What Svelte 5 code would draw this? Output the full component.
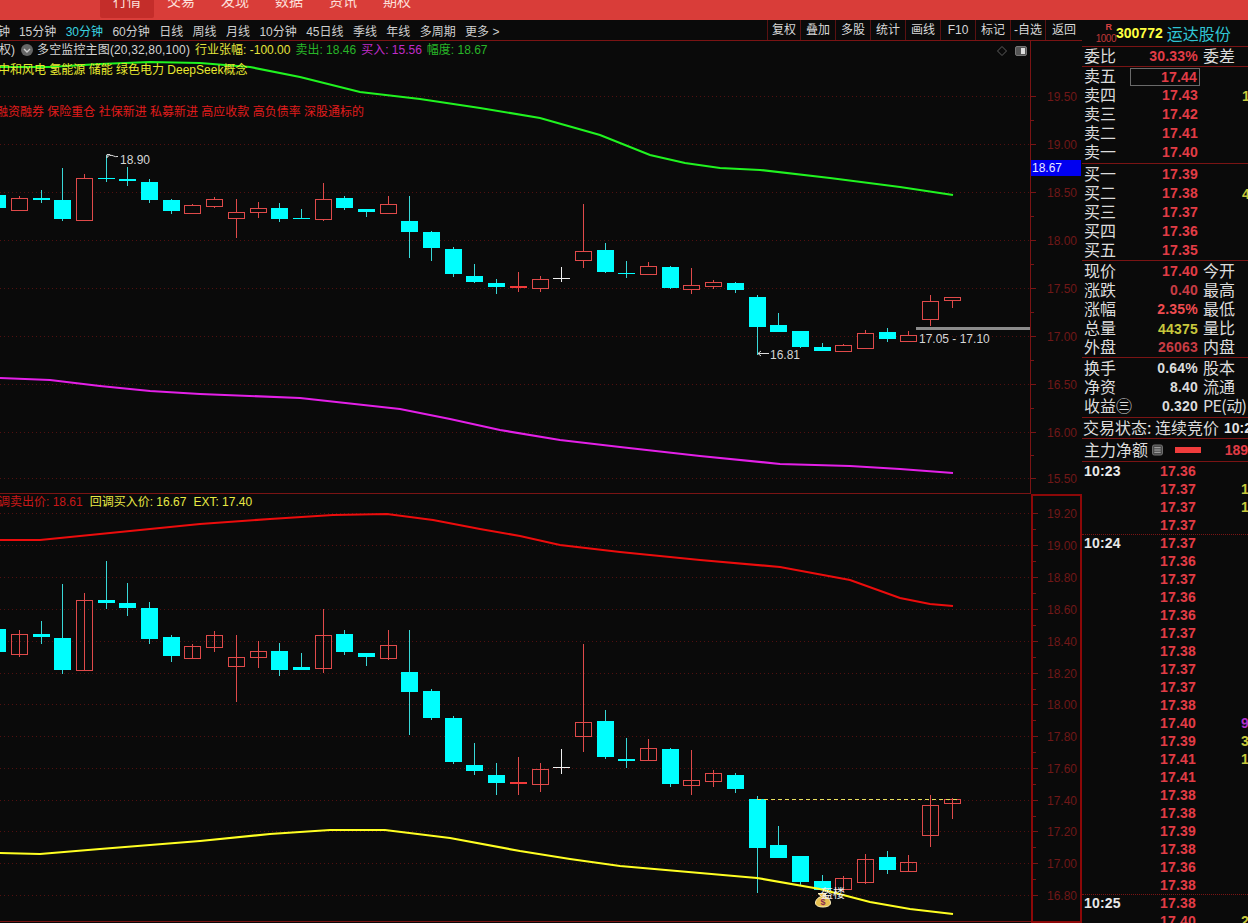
<script>
  const xs = [-3,19,41,62,84,106,127,149,171,192,214,236,258,279,301,323,344,366,388,409,431,453,474,496,518,540,561,583,605,626,648,670,691,713,735,757,778,800,822,843,865,887,908,930,952];
  // type, bodyTop, bodyBottom, wickTop, wickBottom
  const topC = [
    ['c',195,208,195,208],['r',198,210,196,211],['c',198,200,190,203],['c',200,219,168,221],['r',178,220,174,220],
    ['c',178,179,155,182],['c',179,181,167,186],['c',182,200,179,203],['c',200,211,199,214],['r',205,213,204,213],
    ['r',199,206,197,208],['r',212,218,199,238],['r',208,212,202,218],['c',208,219,203,222],['c',218,219,209,219],
    ['r',199,219,183,221],['c',198,208,196,210],['c',209,212,209,217],['r',204,213,196,213],['c',221,232,196,258],
    ['c',232,248,231,261],['c',249,274,247,277],['c',276,282,264,283],['c',283,287,279,294],['r',286,287,272,292],
    ['r',279,288,276,292],['w',278,279,267,282],['r',251,260,204,268],['c',250,272,243,273],['c',273,274,261,278],
    ['r',266,274,262,274],['c',267,288,266,289],['r',285,289,268,294],['r',282,286,280,289],['c',283,290,282,293],
    ['c',297,327,295,355],['c',325,332,313,332],['c',331,347,331,348],['c',347,351,343,351],['r',345,351,344,352],
    ['r',333,348,330,348],['c',332,339,328,342],['r',335,341,331,341],['r',301,319,295,326],['r',297,300,297,308]
  ];
  const botC = [
    ['c',629,652,629,652],['r',634,654,630,657],['c',634,637,621,644],['c',638,670,584,674],['r',600,670,593,671],
    ['c',600,603,561,609],['c',603,608,583,616],['c',608,639,602,644],['c',637,656,635,662],['r',646,658,644,658],
    ['r',635,647,631,652],['r',657,666,635,702],['r',651,657,641,668],['c',651,670,643,676],['c',667,670,653,670],
    ['r',635,668,609,673],['c',634,652,630,655],['c',653,657,653,666],['r',645,658,630,660],['c',672,692,630,735],
    ['c',691,718,689,720],['c',718,762,716,764],['c',765,771,743,775],['c',775,783,763,795],['r',782,783,757,795],
    ['r',769,784,763,792],['w',767,768,749,774],['r',722,736,644,752],['c',721,757,710,759],['c',759,761,738,768],
    ['r',748,760,739,761],['c',749,784,748,787],['r',780,785,750,795],['r',773,781,770,787],['c',775,789,773,793],
    ['c',799,848,796,893],['c',845,858,826,858],['c',856,882,856,885],['c',881,890,875,890],['r',878,889,876,892],
    ['r',859,882,854,884],['c',857,870,851,874],['r',862,871,855,871],['r',805,835,795,847],['r',799,803,798,819]
  ];
  const green = '0,67 50,67 100,64 150,62 200,63 250,67 300,77 360,92 420,99 480,108 540,118 600,135 650,155 685,163 720,168 760,170 830,178 900,187 953,195';
  const magenta = '0,378 50,380 100,386 150,391 200,394 300,398 400,409 450,419 500,430 560,440 620,447 700,456 780,464 850,466 900,469 953,473';
  const redL = '0,540 40,540 100,534 200,524 270,519 333,515 387,514 433,520 480,529 520,536 560,545 620,552 700,560 780,567 850,580 900,598 930,604 953,606';
  const yellowL = '0,853 40,854 100,849 200,841 270,834 330,830 385,830 450,838 520,851 570,859 620,866 700,873 757,878 820,889 870,902 910,909 953,914';

  const topTicks = [['19.50',96],['19.00',144],['18.50',192],['18.00',240],['17.50',288],['17.00',336],['16.50',384],['16.00',432],['15.50',478]];
  const botTicks = [['19.20',513],['19.00',545],['18.80',577],['18.60',609],['18.40',641],['18.20',673],['18.00',704],['17.80',736],['17.60',768],['17.40',800],['17.20',831],['17.00',863],['16.80',895]];
  const minor = (t) => t.slice(1).map((v, i) => Math.round((v[1] + t[i][1]) / 2));

  const tabs = ['行情','交易','发现','数据','资讯','期权'];
  const periods = ['15分钟','30分钟','60分钟','日线','周线','月线','10分钟','45日线','季线','年线','多周期'];
  const tools = ['复权','叠加','多股','统计','画线','F10','标记','-自选','返回'];

  const sells = [['卖五','17.44',''],['卖四','17.43','1'],['卖三','17.42',''],['卖二','17.41',''],['卖一','17.40','']];
  const buys = [['买一','17.39',''],['买二','17.38','4'],['买三','17.37',''],['买四','17.36',''],['买五','17.35','']];
  const stats = [
    ['现价','17.40','今开','red'],['涨跌','0.40','最高','dim'],['涨幅','2.35%','最低','hot'],
    ['总量','44375','量比','vol'],['外盘','26063','内盘','dim']
  ];
  const fin = [['换手','0.64%','股本'],['净资','8.40','流通'],['收益㊂','0.320','PE(动)']];
  const ticks = [
    ['10:23','17.36',''],['','17.37','1'],['','17.37','1'],['','17.37',''],
    ['10:24','17.37',''],['','17.36',''],['','17.37',''],['','17.36',''],['','17.36',''],['','17.37',''],['','17.38',''],['','17.37',''],['','17.37',''],['','17.38',''],
    ['','17.40','9','purple'],['','17.39','3'],['','17.41','1'],['','17.41',''],['','17.38',''],['','17.38',''],['','17.39',''],['','17.38',''],['','17.36',''],['','17.38',''],
    ['10:25','17.38',''],['','17.40','2']
  ];
</script>

{#snippet candles(list, through)}
  {#each list as c, i}
    {@const x = xs[i]}
    {#if c[0] === 'c'}
      <rect x={x} y={c[3]} width="1" height={c[4] - c[3]} fill="#38d8d8" />
      <rect x={x - 8} y={c[1]} width="17" height={c[2] - c[1]} fill="#00ffff" />
    {:else if c[0] === 'w'}
      <rect x={x} y={c[3]} width="1" height={c[4] - c[3]} fill="#f0f0f0" />
      <rect x={x - 8} y={c[1]} width="17" height="1" fill="#f0f0f0" />
    {:else}
      <rect x={x} y={c[3]} width="1" height={c[4] - c[3]} fill="#e04a4a" />
      {#if c[2] - c[1] <= 1}
        <rect x={x - 8} y={c[1]} width="17" height="2" fill="#f03a3a" />
      {:else}
        {#if !through}
          <rect x={x - 8} y={c[1]} width="17" height={c[2] - c[1]} fill="#0a0a0a" />
        {/if}
        <rect x={x - 8} y={c[1]} width="17" height="1" fill="#e04a4a" />
        <rect x={x - 8} y={c[2]} width="17" height="1" fill="#e04a4a" />
        <rect x={x - 8} y={c[1]} width="1" height={c[2] - c[1]} fill="#e04a4a" />
        <rect x={x + 8} y={c[1]} width="1" height={c[2] - c[1]} fill="#e04a4a" />
      {/if}
    {/if}
  {/each}
{/snippet}

{#snippet axis(t, x0)}
  {#each t as v}
    <line class="grid" x1="0" x2="1030" y1={v[1] + 0.5} y2={v[1] + 0.5} />
    <rect x={x0} y={v[1]} width="5" height="1" fill="#7a1414" />
    <text class="ax" x="1077" y={v[1] + 5}>{v[0]}</text>
  {/each}
  {#each minor(t) as y}
    <rect x={x0} y={y} width="3" height="1" fill="#7a1414" />
  {/each}
{/snippet}

<div class="screen">
  <header class="topbar">
    {#each tabs as t, i}
      <div class="tab" class:active={i === 0}>{t}</div>
    {/each}
  </header>

  <div class="main">
    <div class="left">
      <nav class="toolbar">
        <div class="periods">
          <span class="clip">钟</span>
          {#each periods as p}
            <span class:cur={p === '30分钟'}>{p}</span>
          {/each}
          <span>更多 &gt;</span>
        </div>
        <div class="tools">
          {#each tools as t}<span class="tool">{t}</span>{/each}
        </div>
      </nav>

      <section class="panel top">
        <svg width="1082" height="453" viewBox="0 41 1082 453" shape-rendering="crispEdges">
          {@render axis(topTicks, 1031)}
          <rect x="1030" y="41" width="1" height="453" fill="#7a1414" />
          <rect x="0" y="493" width="1030" height="1" fill="#7a1414" />
          <g shape-rendering="auto">
            <polyline class="ln" points={green} stroke="#20f420" />
            <polyline class="ln" points={magenta} stroke="#e420e8" />
          </g>
          {@render candles(topC, false)}

          <rect x="916" y="327" width="114" height="3" fill="#8c8c8c" />
          <text class="note" x="919" y="343">17.05 - 17.10</text>
          <g shape-rendering="auto" fill="none" stroke="#dcdcdc">
            <path d="M107 158V154.5h3l-3 3" />
            <path d="M110 155.5c3-1 4 2 8 1" />
            <path d="M769 353.5H758M761 351l-3 2.5 3 2.5" />
          </g>
          <text class="note" x="120" y="164">18.90</text>
          <text class="note" x="770" y="359">16.81</text>

          <rect x="1031" y="160" width="50" height="16" fill="#0000f0" />
          <text class="tag" x="1032" y="172">18.67</text>

          <g shape-rendering="auto">
            <path d="M1002 46.5l4.5 4.5-4.5 4.5-4.5-4.5z" fill="none" stroke="#5c5c5c" />
            <rect x="1015.5" y="46.5" width="11" height="9" rx="1.5" fill="#555" stroke="#777" />
            <rect x="1021" y="48" width="4" height="6" fill="#ddd" />
          </g>
        </svg>

        <div class="legend row1">
          <span class="wh">权)</span>
          <span class="dot"><svg width="12" height="12" viewBox="0 0 12 12"><circle cx="6" cy="6" r="6" fill="#666" /><path d="M3 5l3 3 3-3" fill="none" stroke="#ccc" stroke-width="1.4" /></svg></span>
          <span class="wh title">多空监控主图(20,32,80,100)</span>
          <span class="yl">行业张幅: -100.00</span>
          <span class="gr">卖出: 18.46</span>
          <span class="pu">买入: 15.56</span>
          <span class="gr">幅度: 18.67</span>
        </div>
        <div class="legend row2">中和风电 氢能源 储能 绿色电力 DeepSeek概念</div>
        <div class="legend row3">融资融券 保险重仓 社保新进 私募新进 高应收款 高负债率 深股通标的</div>
      </section>

      <section class="panel bottom">
        <svg width="1082" height="429" viewBox="0 494 1082 429" shape-rendering="crispEdges">
          {@render axis(botTicks, 1033)}
          <rect x="0" y="921" width="1031" height="1" fill="#7a1414" />
          <rect x="1031" y="494" width="2" height="429" fill="#8c0808" />
          <rect x="1080" y="494" width="2" height="429" fill="#8c0808" />
          <rect x="1031" y="494" width="51" height="2" fill="#8c0808" />
          <rect x="1031" y="921" width="51" height="2" fill="#8c0808" />
          <g shape-rendering="auto">
            <polyline class="ln" points={redL} stroke="#ec0c0c" />
          </g>
          {@render candles(botC, true)}
          <g shape-rendering="auto">
            <polyline class="ln" points={yellowL} stroke="#ffff22" />
          </g>
          <line class="dash" x1="757" x2="960" y1="799.5" y2="799.5" />

          <g shape-rendering="auto">
            <path d="M818 893.5h8l-1.5 3c4 1 6 4 6 6.5 0 2.500-3 4-7.500 4s-7.500-1.500-7.500-4c0-2.500 2-5.500 6-6.500z" fill="#e8c050" stroke="#fff0c0" />
            <text class="bag" x="823" y="905">$</text>
          </g>
          <text class="sig" x="821" y="898">盔楼</text>
        </svg>

        <div class="legend row4">
          <span class="rd">回调卖出价: 18.61</span>
          <span class="yl2">回调买入价: 16.67</span>
          <span class="yl2">EXT: 17.40</span>
        </div>
      </section>
    </div>

    <aside class="side">
      <div class="head">
        <div class="badge"><b>R</b><i>1000</i></div>
        <div class="code">300772</div>
        <div class="name">运达股份</div>
      </div>

      <div class="block one">
        <div class="row"><span>委比</span><span class="val red">30.33%</span><span>委差</span></div>
      </div>

      <div class="block sell">
        {#each sells as r, i}
          <div class="row">
            <span>{r[0]}</span>
            <span class="val red" class:boxed={i === 0}>{r[1]}</span>
            <span></span>
            <span class="vol">{r[2]}</span>
          </div>
        {/each}
      </div>
      <div class="block">
        {#each buys as r}
          <div class="row">
            <span>{r[0]}</span>
            <span class="val red">{r[1]}</span>
            <span></span>
            <span class="vol">{r[2]}</span>
          </div>
        {/each}
      </div>
      <div class="block">
        {#each stats as r}
          <div class="row">
            <span>{r[0]}</span>
            <span class="val {r[3]}">{r[1]}</span>
            <span>{r[2]}</span>
          </div>
        {/each}
      </div>
      <div class="block three">
        {#each fin as r, i}
          <div class="row">
            <span class="wide">{r[0]}</span>
            <span class="val light">{r[1]}</span>
            <span class:pe={i === 2}>{r[2]}</span>
          </div>
        {/each}
      </div>

      <div class="status"><span>交易状态: 连续竞价</span><b>10:2</b></div>
      <div class="fund">
        <span>主力净额</span>
        <svg class="fundicon" width="12" height="12" viewBox="0 0 12 12">
          <rect x="0.500" y="0.500" width="11" height="11" rx="2" fill="#4a4a4a" stroke="#777" />
          <path d="M2.500 3.500h7M2.500 6h7M2.500 8.500h7" stroke="#bbb" />
        </svg>
        <span class="bar"></span>
        <b>189</b>
      </div>

      <div class="ticks">
        {#each ticks as t}
          <div class="tick" class:sep={t[0] !== '' && t[0] !== '10:23'}>
            <b class="time">{t[0]}</b>
            <b class="price">{t[1]}</b>
            <span></span>
            <b class="qty" class:purple={t[3] === 'purple'}>{t[2]}</b>
          </div>
        {/each}
      </div>
    </aside>
  </div>
</div>

<style>
  :global(body) { margin: 0; background: #0a0a0a; }
  .screen {
    width: 1248px;
    height: 923px;
    overflow: hidden;
    background: #0a0a0a;
    color: #d4d4d4;
    font-family: "Liberation Sans", "Noto Sans CJK SC", sans-serif;
    font-size: 12px;
  }
  .topbar {
    height: 20px;
    background: #d93d39;
    display: flex;
    padding-left: 100px;
    overflow: hidden;
  }
  .tab {
    width: 54px;
    height: 18px;
    line-height: 2px;
    text-align: center;
    font-size: 14px;
    color: #fde0dc;
    border-radius: 0 0 2px 2px;
  }
  .tab.active { background: #c42d2a; }
  .main { display: flex; height: 903px; }
  .left { width: 1082px; flex: none; }
  .toolbar {
    height: 20px;
    border-bottom: 1px solid #7a1414;
    display: flex;
    justify-content: space-between;
    align-items: center;
    overflow: hidden;
  }
  .periods { display: flex; gap: 9.4px; margin-left: -2px; white-space: nowrap; color: #cfcfcf; }
  .periods .clip { margin-right: -0.5px; }
  .periods .cur { color: #3ad4e0; }
  .tools { display: flex; height: 20px; margin-right: 0; }
  .tool {
    width: 34px;
    border-left: 1px solid #5a1212;
    text-align: center;
    line-height: 20px;
    color: #d8d8d8;
  }
  .tool:last-child { width: 36px; }
  .tool:first-child { width: 32px; }
  .panel { position: relative; }
  .panel svg { display: block; }
  .grid { stroke: #521010; stroke-dasharray: 1 3; }
  .ax { font-size: 12px; fill: #701818; text-anchor: end; font-family: "Liberation Sans", sans-serif; }
  .ln { fill: none; stroke-width: 2.2; }
  .note { font-size: 12px; fill: #d6d6d6; font-family: "Liberation Sans", sans-serif; }
  .tag { font-size: 12px; fill: #e8e8ff; font-family: "Liberation Sans", sans-serif; }
  .dash { stroke: #e8e060; stroke-dasharray: 4 3; }
  .bag { font-size: 9px; font-weight: 700; fill: #8a2c50; text-anchor: middle; font-family: "Liberation Sans", sans-serif; }
  .sig { font-size: 12px; fill: #f0f0f0; font-family: "Noto Sans CJK SC", sans-serif; }
  .legend { position: absolute; left: 0; white-space: nowrap; line-height: 16px; }
  .row1 { top: 1px; display: flex; align-items: center; }
  .row1 .wh { color: #d4d4d4; }
  .row1 > span:first-child { margin-left: -1px; }
  .row1 .title { letter-spacing: 0.15px; margin-left: 1px; }
  .dot { display: flex; margin: 0 3px 0 6px; }
  .yl { color: #e4e43c; margin-left: 5px; }
  .gr { color: #28b428; margin-left: 5px; }
  .pu { color: #c02cc8; margin-left: 5px; }
  .row2 { top: 21px; color: #e8e830; left: -2px; }
  .row3 { top: 63px; color: #e01c1c; left: -4px; }
  .row4 { top: 0; left: -14px; display: flex; gap: 7px; }
  .rd { color: #c81818; }
  .yl2 { color: #e8e844; }

  .side {
    width: 166px;
    flex: none;
    overflow: hidden;
    font-family: "Noto Sans CJK SC", sans-serif;
    font-size: 16px;
    color: #dcdcdc;
  }
  .head {
    height: 26px;
    border-bottom: 1px solid #7a1414;
    display: flex;
    align-items: center;
  }
  .badge { width: 34px; text-align: right; display: flex; flex-direction: column; align-items: flex-end; line-height: 9px; }
  .badge b { font: 700 9px "Liberation Sans", sans-serif; color: #d84040; margin-right: 4px; }
  .badge i { font: 10px "Liberation Sans", sans-serif; color: #c03838; letter-spacing: -0.500px; margin-top: 1px; }
  .code { font: 700 14px "Liberation Sans", sans-serif; color: #ffff40; margin-right: 4px; }
  .name { font-size: 16px; color: #30c4d4; line-height: 20px; white-space: nowrap; }
  .block { border-bottom: 1px solid #7a1414; padding-top: 1px; }
  .block.one { padding-top: 0; height: 19px; }
  .block.sell { padding-top: 0; padding-bottom: 1px; }
  .block.three { padding-bottom: 1px; }
  .row {
    height: 19px;
    display: grid;
    grid-template-columns: 34px 80px 44px auto;
    column-gap: 0;
    padding-left: 2px;
    align-items: center;
    line-height: 19px;
    white-space: nowrap;
  }
  .row > span:not(.val):not(.vol) { margin-top: -3px; line-height: 16px; }
  .row .wide { width: 60px; }
  .row > :nth-child(3) { margin-left: 5px; }
  .row .pe { letter-spacing: -0.6px; }
  .val {
    font: 700 14px/17px "Liberation Sans", sans-serif;
    letter-spacing: 0.200px;
    text-align: right;
    color: #e23c46;
  }
  .val.boxed {
    box-sizing: border-box;
    height: 18px;
    margin-right: -2px;
    padding-right: 2px;
    width: 70px;
    justify-self: end;
    border: 1px solid #6a6a6a;
  }
  .val.dim { color: #c83c44; }
  .val.hot { color: #f04c50; }
  .val.vol { color: #c8c83c; }
  .val.light { color: #dcdcdc; }
  .vol { font: 700 14px "Liberation Sans", sans-serif; color: #c8c83c; }
  .status {
    height: 20px;
    border-bottom: 1px solid #7a1414;
    display: flex;
    align-items: center;
    padding-left: 1px;
    white-space: nowrap;
    line-height: 20px;
  }
  .status span { margin-top: -2px; }
  .status b { font: 700 14px "Liberation Sans", sans-serif; margin-left: 5px; color: #e4e4e4; }
  .fund {
    height: 22px;
    border-bottom: 1px solid #7a1414;
    display: flex;
    align-items: center;
    padding-left: 2px;
    white-space: nowrap;
    line-height: 22px;
  }
  .fund > span:first-child { margin-top: -2px; }
  .fundicon { margin-left: 4px; }
  .bar { width: 28px; height: 6px; background: #f03c3c; margin-left: 12px; }
  .fund b { font: 700 14px "Liberation Sans", sans-serif; color: #e23c46; margin-left: 24px; }
  .ticks { display: flex; flex-direction: column; }
  .tick {
    box-sizing: border-box;
    flex: none;
    height: 18px;
    display: grid;
    grid-template-columns: 76px 37px 44px auto;
    padding-left: 2px;
    align-items: center;
    font: 700 14px/17px "Liberation Sans", sans-serif;
    letter-spacing: 0.200px;
  }
  .tick.sep { border-top: 1px dotted #7a1414; }
  .time { color: #e8e8e8; font-weight: 700; }
  .price { color: #e23c46; }
  .qty { color: #c8c83c; }
  .qty.purple { color: #b030c8; }
</style>
